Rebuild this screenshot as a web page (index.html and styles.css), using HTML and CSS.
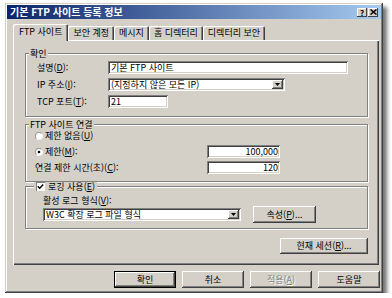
FILE: index.html
```html
<!DOCTYPE html>
<html lang="ko">
<head>
  <meta charset="UTF-8" />
  <title>기본 FTP 사이트 등록 정보</title>
  <link rel="stylesheet" href="styles.css">
</head>
<body>
  <div class="window">
    <div class="titlebar">
      <span class="title">기본 FTP 사이트 등록 정보</span>
      <div class="caption-btns">
        <span class="cap-btn">?</span>
        <span class="cap-btn">
          <svg width="7" height="6" viewBox="0 0 7 6"><path d="M0.5 0.5 L6.5 5.5 M6.5 0.5 L0.5 5.5" stroke="#000" stroke-width="1.5"/></svg>
        </span>
      </div>
    </div>

    <div class="tabs">
      <span class="tab active">FTP 사이트</span>
      <span class="tab">보안 계정</span>
      <span class="tab">메시지</span>
      <span class="tab">홈 디렉터리</span>
      <span class="tab">디렉터리 보안</span>
    </div>

    <div class="panel">
      <div class="group ident">
        <div class="legend">확인</div>
        <div class="form">
          <span>설명(<u>D</u>):</span>
          <div class="field desc">기본 FTP 사이트</div>
          <span>IP 주소(<u>I</u>):</span>
          <div class="field select ip">
            <span class="val">(지정하지 않은 모든 IP)</span>
            <span class="drop"><svg width="5" height="3" viewBox="0 0 5 3"><path d="M0 0H5L2.5 3Z"/></svg></span>
          </div>
          <span>TCP 포트(<u>T</u>):</span>
          <div class="field port">21</div>
        </div>
      </div>

      <div class="group conn">
        <div class="legend">FTP 사이트 연결</div>
        <div class="conn-form">
          <span class="radio">
            <svg width="8" height="8" viewBox="0 0 12 12"><circle cx="6" cy="6" r="5" fill="#fff"/><path d="M2 10A5.6 5.6 0 0 1 10 2" fill="none" stroke="#808080" stroke-width="1.3"/><path d="M10 2A5.6 5.6 0 0 1 2 10" fill="none" stroke="#fff" stroke-width="1.3"/></svg>
            <span>제한 없음(<u>U</u>)</span>
          </span>
          <span></span>
          <span class="radio">
            <svg width="8" height="8" viewBox="0 0 12 12"><circle cx="6" cy="6" r="5" fill="#fff"/><path d="M2 10A5.6 5.6 0 0 1 10 2" fill="none" stroke="#808080" stroke-width="1.3"/><path d="M10 2A5.6 5.6 0 0 1 2 10" fill="none" stroke="#fff" stroke-width="1.3"/><circle cx="6" cy="6" r="2" fill="#000"/></svg>
            <span>제한(<u>M</u>):</span>
          </span>
          <div class="field num">100,000</div>
          <span>연결 제한 시간(초)(<u>C</u>):</span>
          <div class="field num">120</div>
        </div>
      </div>

      <div class="group logging">
        <div class="legend check-legend">
          <span class="check"><svg width="7" height="7" viewBox="0 0 7 7"><path d="M0.8 3.2 L2.7 5.2 L6.2 1.5" fill="none" stroke="#000" stroke-width="1.4"/></svg></span>
          <span>로깅 사용(<u>E</u>)</span>
        </div>
        <div class="log-label">활성 로그 형식(<u>V</u>):</div>
        <div class="log-row">
          <div class="field select fmt">
            <span class="val">W3C 확장 로그 파일 형식</span>
            <span class="drop"><svg width="5" height="3" viewBox="0 0 5 3"><path d="M0 0H5L2.5 3Z"/></svg></span>
          </div>
          <button class="btn props">속성(<u>P</u>)...</button>
        </div>
      </div>

      <div class="session-row">
        <button class="btn session">현재 세션(<u>R</u>)...</button>
      </div>
    </div>

    <div class="actions">
      <button class="btn default">확인</button>
      <button class="btn">취소</button>
      <button class="btn disabled">적용(<u>A</u>)</button>
      <button class="btn">도움말</button>
    </div>
  </div>
</body>
</html>
```

FILE: styles.css
```css
* {
  box-sizing: border-box;
  margin: 0;
  padding: 0;
}

body {
  background: #fff;
  font-family: "Noto Sans CJK KR", "Noto Sans", sans-serif;
  font-size: 9px;
  line-height: 10px;
  color: #000;
}

u {
  text-underline-offset: 1px;
}

.window {
  width: 378px;
  height: 290px;
  margin: 3px 0 0 5px;
  padding: 2px;
  background: #d4d0c8;
  display: flex;
  flex-direction: column;
  box-shadow: inset -1px -1px #404040, inset 1px 1px #d4d0c8,
    inset -2px -2px #808080, inset 2px 2px #fff,
    4px 4px 4px rgba(0,0,0,0.55);
}

.titlebar {
  height: 14px;
  display: flex;
  align-items: center;
  justify-content: space-between;
  padding: 0 3px;
  background: linear-gradient(90deg, #0a246a, #a6caf0);
  color: #fff;
  font-size: 10px;
  font-weight: bold;
}

.caption-btns {
  display: flex;
  gap: 1px;
}

.cap-btn {
  width: 10px;
  height: 9px;
  display: flex;
  align-items: center;
  justify-content: center;
  background: #d4d0c8;
  color: #000;
  font-size: 8px;
  line-height: 9px;
  box-shadow: inset -1px -1px #404040, inset 1px 1px #fff;
}

/* tabs */
.tabs {
  display: flex;
  align-items: flex-end;
  height: 16px;
  margin: 5px 0 0 6px;
}

.tab {
  height: 14px;
  padding: 0 5px;
  line-height: 14px;
  border-radius: 2px 2px 0 0;
  box-shadow: inset 1px 1px #fff, inset -1px 0 #404040, inset -2px 0 #808080;
}

.tab.active {
  height: 17px;
  margin-bottom: -1px;
  line-height: 15px;
  padding: 0 6px;
  position: relative;
  z-index: 1;
  background: #d4d0c8;
}

.panel {
  height: 225px;
  margin: 0 2px 0 6px;
  padding: 0 11px 0 12px;
  box-shadow: inset 1px 1px #fff, inset -1px -1px #404040, inset -2px -2px #808080;
}

/* group boxes */
.group {
  border: 1px solid #808080;
  box-shadow: inset 1px 1px #fff, 1px 1px #fff;
}

.legend {
  width: fit-content;
  margin: -5px 0 0 3px;
  padding: 0 1px;
  line-height: 9px;
  background: #d4d0c8;
}

.ident {
  margin-top: 13px;
  padding-bottom: 8px;
}

.form {
  display: grid;
  grid-template-columns: 71px auto;
  grid-auto-rows: 13px;
  row-gap: 4px;
  align-items: center;
  margin: 3px 0 0 11px;
}

.field {
  height: 13px;
  padding: 0 3px;
  line-height: 13px;
  white-space: nowrap;
  overflow: hidden;
  background: #fff;
  box-shadow: inset 1px 1px #808080, inset -1px -1px #fff,
    inset 2px 2px #404040, inset -2px -2px #d4d0c8;
}

.desc { width: 240px; }
.ip { width: 177px; }
.port { width: 60px; }

.select {
  display: flex;
  align-items: center;
  padding: 0 2px 0 3px;
}

.select .val {
  flex: 1;
}

.drop {
  width: 11px;
  height: 9px;
  display: flex;
  align-items: center;
  justify-content: center;
  background: #d4d0c8;
  box-shadow: inset -1px -1px #404040, inset 1px 1px #fff, inset -2px -2px #808080;
}

.conn {
  margin-top: 7px;
  padding-bottom: 7px;
}

.conn-form {
  display: grid;
  grid-template-columns: 172px 73px;
  grid-template-rows: 12px 13px 13px;
  row-gap: 3px;
  align-items: center;
  margin: 1px 0 0 9px;
}

.radio {
  display: flex;
  align-items: center;
  gap: 2px;
}

.num {
  text-align: right;
  padding-right: 2px;
}

.logging {
  margin-top: 4px;
  padding-bottom: 5px;
}

.check-legend {
  display: flex;
  align-items: center;
  gap: 3px;
  margin-left: 8px;
  padding: 0 2px;
}

.check {
  width: 9px;
  height: 9px;
  display: flex;
  align-items: center;
  justify-content: center;
  background: #fff;
  box-shadow: inset 1px 1px #808080, inset -1px -1px #fff;
}

.log-label {
  margin: 5px 0 0 17px;
}

.log-row {
  display: flex;
  align-items: center;
  height: 17px;
  margin-left: 17px;
}

.fmt { width: 198px; }

/* buttons */
.btn {
  display: flex;
  align-items: center;
  justify-content: center;
  border: none;
  font: inherit;
  color: #000;
  background: #d4d0c8;
  box-shadow: inset -1px -1px #404040, inset 1px 1px #fff, inset -2px -2px #808080;
}

.props {
  width: 63px;
  height: 17px;
  margin-left: 12px;
}

.session-row {
  display: flex;
  justify-content: flex-end;
  margin-top: 9px;
}

.session {
  width: 88px;
  height: 16px;
}

.actions {
  display: flex;
  justify-content: flex-end;
  gap: 6px;
  margin: 6px 1px 0 0;
}

.actions .btn {
  width: 62px;
  height: 17px;
}

.actions .default {
  box-shadow: inset 0 0 0 1px #000, inset -2px -2px #404040,
    inset 2px 2px #fff, inset -3px -3px #808080;
}

.disabled {
  color: #808080;
  text-shadow: 1px 1px #fff;
}
```
